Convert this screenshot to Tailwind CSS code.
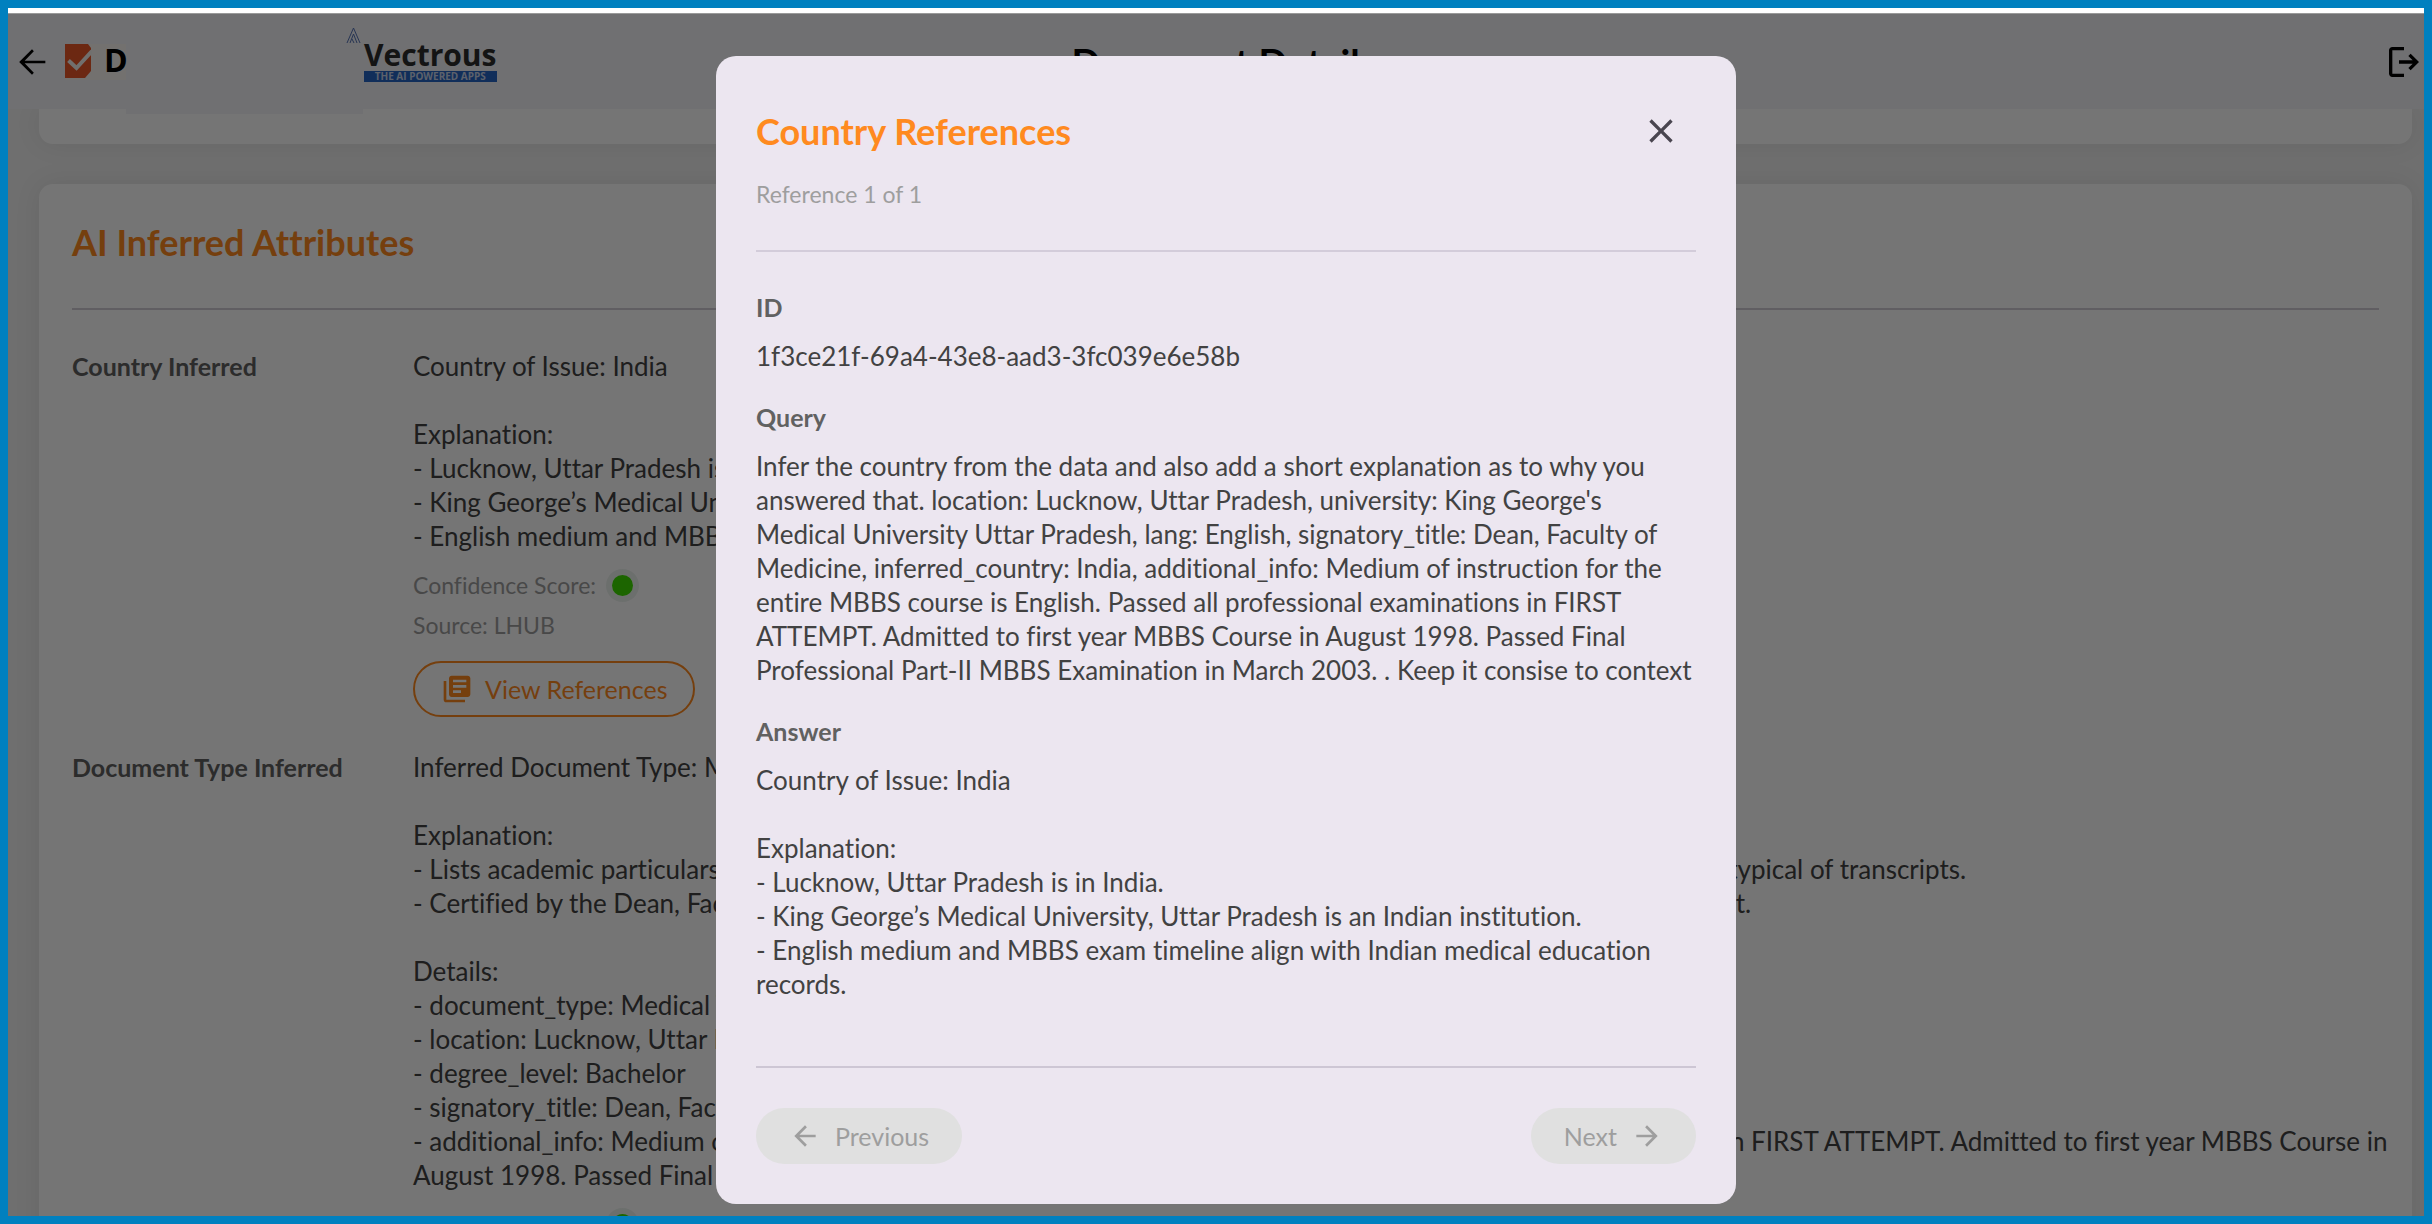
<!DOCTYPE html>
<html lang="en">
<head>
    <meta charset="UTF-8">
    <meta name="viewport" content="width=device-width, initial-scale=1.0">
    <title>Document Details</title>
    <script src="https://cdn.jsdelivr.net/npm/@tailwindcss/browser@4"></script>
</head>
<body class="font-['Lato',sans-serif] text-[26px] leading-[34px] text-[#424242] [font-variant-ligatures:none]">
    <div class="h-screen flex flex-col border-8 border-[#0080bf] overflow-hidden">
        <div class="h-[6px] shrink-0 bg-white border-b border-[#9a9a9a]"></div>

        <div class="relative flex-1 min-h-0 overflow-hidden bg-[#f1f1f1]">
            <!-- Header -->
            <header class="relative z-10 h-[95px] grid grid-cols-[1fr_auto_1fr] items-center bg-[#f3f3f8] text-black">
                <div class="h-full flex items-center pl-1">
                    <button type="button" aria-label="Back">
                        <svg class="size-10" viewBox="0 0 24 24" fill="currentColor"><path d="M20 11.2H7.6l5.5-5.6L12 4.4 4.3 12l7.7 7.6 1.1-1.2-5.5-5.6H20z"/></svg>
                    </button>
                    <div class="ml-[13px] h-9 w-[61px] flex bg-[#faf7f2]">
                        <svg class="h-[34px] w-[27px] shrink-0" viewBox="0 0 27 34">
                            <path d="M0 0H23L26 4V27L20 34H0Z" fill="#eb5729"/>
                            <path d="M3.500 16.500L11.500 24L27 7" fill="none" stroke="#f6f3f0" stroke-width="4"/>
                        </svg>
                        <span class="ml-3 font-['Open_Sans',sans-serif] font-bold text-[32px] leading-[32px]">D</span>
                    </div>
                    <div class="ml-[220px] h-full flex items-start">
                        <svg class="mt-3.5 h-4 w-[18px]" viewBox="0 0 18 16" fill="none" stroke="#5573b5" stroke-width="1">
                            <path d="M7.500 0L1 15M7.500 0L14 15M7.500 6L4 15M7.500 6L11 15M6 11L8 15"/>
                        </svg>
                        <div class="mt-6 font-['Open_Sans',sans-serif] font-bold">
                            <div class="text-[30px] leading-[33px] text-[#2c2c2c]">Vectrous</div>
                            <div class="bg-[#2764c4] text-center text-[10px] leading-[11px] text-[#c9d4ea]">THE AI POWERED APPS</div>
                        </div>
                    </div>
                </div>
                <h1 class="ml-4 text-[38px] leading-[48px] font-bold">Document Details</h1>
                <button type="button" aria-label="Log out" class="justify-self-end">
                    <svg class="size-10" viewBox="0 0 24 24" fill="currentColor"><path d="M5 21q-.9 0-1.400-.6T3 19V5q0-.9.6-1.400T5 3h7v2H5v14h7v2zm11-4l-1.400-1.400 2.600-2.600H9v-2h8.200l-2.600-2.600L16 7l5 5z"/></svg>
                </button>
                <div class="absolute left-[118px] top-full h-[5px] w-[237px] bg-[#f3f3f8]"></div>
            </header>

            <main class="ml-[31px] mr-3">
                <div class="h-[35px] rounded-b-[14px] bg-white shadow-[0_0_28px_rgba(0,0,0,0.07)]"></div>

                <section class="mt-10 rounded-[14px] bg-white px-[33px] pt-[34px] pb-16 shadow-[0_0_28px_rgba(0,0,0,0.07)]">
                    <h2 class="text-[36px] leading-[48px] font-bold text-[#ff8a1f]">AI Inferred Attributes</h2>
                    <hr class="mt-[42px] border-t-2 border-[#d2ced6]">

                    <dl class="mt-[39px] -mr-4 grid grid-cols-[341px_1fr] gap-y-8">
                        <dt class="text-[25px] font-bold text-[#616161]">Country Inferred</dt>
                        <dd>
                            <p class="whitespace-pre-line">Country of Issue: India

                                Explanation:
                                - Lucknow, Uttar Pradesh is in India.
                                - King George’s Medical University, Uttar Pradesh is an Indian institution.
                                - English medium and MBBS exam timeline align with Indian medical education records.</p>
                            <div class="mt-4 flex items-center gap-4 text-[23px] leading-[32px] text-[#9e9e9e]">
                                Confidence Score:
                                <span class="size-[21px] rounded-full bg-[#3ddc00] shadow-[0_0_0_6px_rgba(90,150,110,0.12)]"></span>
                            </div>
                            <p class="mt-2 text-[23px] leading-[32px] text-[#9e9e9e]">Source: LHUB</p>
                            <button type="button" class="mt-5 mb-px h-14 flex items-center gap-3 rounded-full border-2 border-[#ff8a1f] px-[26px] text-[25px] text-[#ff8a1f]">
                                <svg class="size-8" viewBox="0 0 24 24" fill="currentColor"><path d="M4 6H2v14c0 1.100.9 2 2 2h14v-2H4z"/><path fill-rule="evenodd" d="M20 2H8c-1.100 0-2 .9-2 2v12c0 1.100.9 2 2 2h12c1.100 0 2-.9 2-2V4c0-1.100-.9-2-2-2zm-1 9H9V9h10zm-4 4H9v-2h6zm4-8H9V5h10z"/></svg>
                                View References
                            </button>
                        </dd>

                        <dt class="text-[25px] font-bold text-[#616161]">Document Type Inferred</dt>
                        <dd>
                            <p class="whitespace-pre-line">Inferred Document Type: Medical Transcript

                                Explanation:
                                - Lists academic particulars, examination details, subjects, grades, attempts and the course duration, all of which are typical of transcripts.
                                - Certified by the Dean, Faculty of Medicine, confirming that it is an official academic document issued to this student.

                                Details:
                                - document_type: Medical Transcript
                                - location: Lucknow, Uttar Pradesh
                                - degree_level: Bachelor
                                - signatory_title: Dean, Faculty of Medicine
                                - additional_info: Medium of instruction for the entire MBBS course is English. Passed all professional examinations in FIRST ATTEMPT. Admitted to first year MBBS Course in August 1998. Passed Final Professional Part-II MBBS Examination in March 2003.</p>
                            <div class="mt-4 flex items-center gap-4 text-[23px] leading-[32px] text-[#9e9e9e]">
                                Confidence Score:
                                <span class="size-[21px] rounded-full bg-[#3ddc00] shadow-[0_0_0_6px_rgba(90,150,110,0.12)]"></span>
                            </div>
                        </dd>
                    </dl>
                </section>
            </main>

            <!-- References dialog -->
            <div class="absolute inset-0 z-20 flex items-start justify-center bg-black/54 pt-[42px] pl-5">
                <div role="dialog" aria-modal="true" aria-labelledby="dialog-title" class="w-full max-w-[1020px] rounded-[20px] bg-[#ece6f0] p-10">
                    <div class="flex items-center justify-between">
                        <h2 id="dialog-title" class="text-[36px] leading-[48px] font-bold text-[#ff8a1f]">Country References</h2>
                        <button type="button" aria-label="Close" class="size-[70px] flex items-center justify-center text-[#49454f]">
                            <svg class="size-10" viewBox="0 0 24 24" fill="currentColor"><path d="M19 6.410L17.590 5 12 10.590 6.410 5 5 6.410 10.590 12 5 17.590 6.410 19 12 13.410 17.590 19 19 17.590 13.410 12z"/></svg>
                        </button>
                    </div>
                    <p class="mt-3 text-[23px] leading-[32px] text-[#9e9e9e]">Reference 1 of 1</p>
                    <hr class="mt-10 border-t-2 border-[#d3ccda]">

                    <div class="mt-[38px] flex flex-col gap-[27px]">
                        <div>
                            <h3 class="mb-[15px] text-[25px] font-bold text-[#616161]">ID</h3>
                            <p>1f3ce21f-69a4-43e8-aad3-3fc039e6e58b</p>
                        </div>
                        <div>
                            <h3 class="mb-[15px] text-[25px] font-bold text-[#616161]">Query</h3>
                            <p>Infer the country from the data and also add a short explanation as to why you answered that. location: Lucknow, Uttar Pradesh, university: King George's Medical University Uttar Pradesh, lang: English, signatory_title: Dean, Faculty of Medicine, inferred_country: India, additional_info: Medium of instruction for the entire MBBS course is English. Passed all professional examinations in FIRST ATTEMPT. Admitted to first year MBBS Course in August 1998. Passed Final Professional Part-II MBBS Examination in March 2003. . Keep it consise to context</p>
                        </div>
                        <div>
                            <h3 class="mb-[15px] text-[25px] font-bold text-[#616161]">Answer</h3>
                            <p class="whitespace-pre-line">Country of Issue: India

                                Explanation:
                                - Lucknow, Uttar Pradesh is in India.
                                - King George’s Medical University, Uttar Pradesh is an Indian institution.
                                - English medium and MBBS exam timeline align with Indian medical education records.</p>
                        </div>
                    </div>

                    <hr class="mt-[65px] border-t-2 border-[#cdc6d4]">
                    <div class="mt-10 flex justify-between text-[25px] text-[#9e9e9e]">
                        <button type="button" disabled class="h-14 flex items-center gap-3.5 rounded-full bg-[#e0e0e0] px-[33px]">
                            <svg class="size-8" viewBox="0 0 24 24" fill="currentColor"><path d="M20 11H7.830l5.590-5.590L12 4l-8 8 8 8 1.410-1.410L7.830 13H20z"/></svg>
                            Previous
                        </button>
                        <button type="button" disabled class="h-14 flex items-center gap-3.5 rounded-full bg-[#e0e0e0] px-[33px]">
                            Next
                            <svg class="size-8" viewBox="0 0 24 24" fill="currentColor"><path d="M12 4l-1.410 1.410L16.170 11H4v2h12.170l-5.580 5.590L12 20l8-8z"/></svg>
                        </button>
                    </div>
                </div>
            </div>
        </div>
    </div>
</body>
</html>
